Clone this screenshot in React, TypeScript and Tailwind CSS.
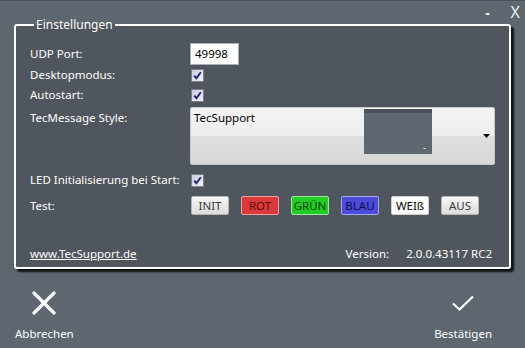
import React from 'react';

const Check = () => (
  <div className="w-[13px] h-[13px] border border-[#7d7f8a] bg-[linear-gradient(135deg,#c9cbe0,#f2f2fa)] flex items-center justify-center">
    <svg width="9" height="9" viewBox="0 0 9 9">
      <path d="M1.2 4.6 L3.4 7.2 L7.8 1.2" fill="none" stroke="#1c2370" strokeWidth="1.9" />
    </svg>
  </div>
);

const tests = [
  { label: 'INIT', cls: 'bg-[linear-gradient(#f7f7f7,#dcdcdc)] text-[#3a3a3a] border-[#b5b5b5]' },
  { label: 'ROT', cls: 'bg-[#d93a3a] text-[#5a0a0a] border-[#f0a0a0]' },
  { label: 'GRÜN', cls: 'bg-[#22cc22] text-[#0a3f0a] border-[#9ee69e]' },
  { label: 'BLAU', cls: 'bg-[#4b4bd6] text-[#0d0d55] border-[#a8a8ee]' },
  { label: 'WEIß', cls: 'bg-white text-black border-[#d0d0d0]' },
  { label: 'AUS', cls: 'bg-[linear-gradient(#f7f7f7,#dcdcdc)] text-[#3a3a3a] border-[#b5b5b5]' },
];

export default function App() {
  return (
    <div
      className="w-[525px] h-[348px] bg-[#5e6670] border-t border-[#4c535b] flex flex-col text-white text-[11.5px]"
      style={{ fontFamily: '"Noto Sans", "Open Sans", sans-serif' }}
    >
      {/* title bar */}
      <div className="h-[19px] flex justify-end items-end pr-[5px] gap-[21px] text-[#f0f0f0]">
        <span className="font-bold text-[14px] leading-[14px]">-</span>
        <span className="text-[16px] leading-[15px]">X</span>
      </div>

      <fieldset className="mx-[14px] border-2 border-white rounded-[3px] bg-[#50565d] px-[14px] pt-[13px] pb-[4px] shadow-[3px_3px_2px_rgba(0,0,0,0.85)]">
        <legend className="ml-[4px] px-[2px] text-[12px] leading-[10px]">Einstellungen</legend>

        <div className="flex items-center h-[22px]">
          <span className="w-[160px]">UDP Port:</span>
          <div className="w-[49px] h-[22px] bg-white border border-[#aab0b8] text-black px-[4px] flex items-center">49998</div>
        </div>
        <div className="flex items-center h-[20px]">
          <span className="w-[161px]">Desktopmodus:</span>
          <Check />
        </div>
        <div className="flex items-center h-[20px]">
          <span className="w-[161px]">Autostart:</span>
          <Check />
        </div>
        <div className="flex items-start mt-[2px] h-[58px]">
          <span className="w-[160px] pt-[2px]">TecMessage Style:</span>
          <div className="relative flex-1 h-[58px] rounded-[2px] border border-[#c8c8c8] bg-[linear-gradient(#f3f3f3_0%,#eeeeee_50%,#dfdfdf_50%,#d7d7d7_100%)] flex text-black">
            <span className="pl-[3px] pt-[1px]">TecSupport</span>
            <div className="ml-auto mr-[62px] mt-[1px] w-[68px] h-[45px] bg-[#5e6670] border-t-[4px] border-[#4c525a] flex items-end justify-end pr-[6px] pb-[3px]">
              <span className="text-white text-[9px] leading-[6px]">-</span>
            </div>
            <svg className="absolute right-[4px] top-[26px]" width="7" height="4" viewBox="0 0 7 4">
              <path d="M0 0 H7 L3.5 4 Z" fill="#000" />
            </svg>
          </div>
        </div>
        <div className="flex items-center h-[20px] mt-[5px]">
          <span className="w-[161px]">LED Initialisierung bei Start:</span>
          <Check />
        </div>
        <div className="flex items-center h-[21px] mt-[5px]">
          <span className="w-[161px]">Test:</span>
          <div className="flex gap-[12px]">
            {tests.map((t) => (
              <div
                key={t.label}
                className={`w-[38px] h-[19px] rounded-[2px] border flex items-center justify-center ${t.cls}`}
              >
                {t.label}
              </div>
            ))}
          </div>
        </div>

        <div className="flex items-center h-[18px] mt-[29px]">
          <span className="underline">www.TecSupport.de</span>
          <span className="ml-auto">Version:</span>
          <span className="ml-[17px] mr-[3px]">2.0.0.43117 RC2</span>
        </div>
      </fieldset>

      {/* bottom actions */}
      <div className="flex justify-between px-[15px] pr-[33px] mt-[22px]">
        <div className="flex flex-col items-center">
          <svg width="24" height="24" viewBox="0 0 24 24">
            <path d="M2 2 L22 22 M22 2 L2 22" stroke="#fff" strokeWidth="3.2" strokeLinecap="round" />
          </svg>
          <span className="mt-[10px]">Abbrechen</span>
        </div>
        <div className="flex flex-col items-center">
          <svg className="mt-[4px]" width="22" height="16" viewBox="0 0 22 16">
            <path d="M1 8.5 L7.5 14.5 L21 1.5" fill="none" stroke="#fff" strokeWidth="2.2" />
          </svg>
          <span className="mt-[14px]">Bestätigen</span>
        </div>
      </div>
    </div>
  );
}
